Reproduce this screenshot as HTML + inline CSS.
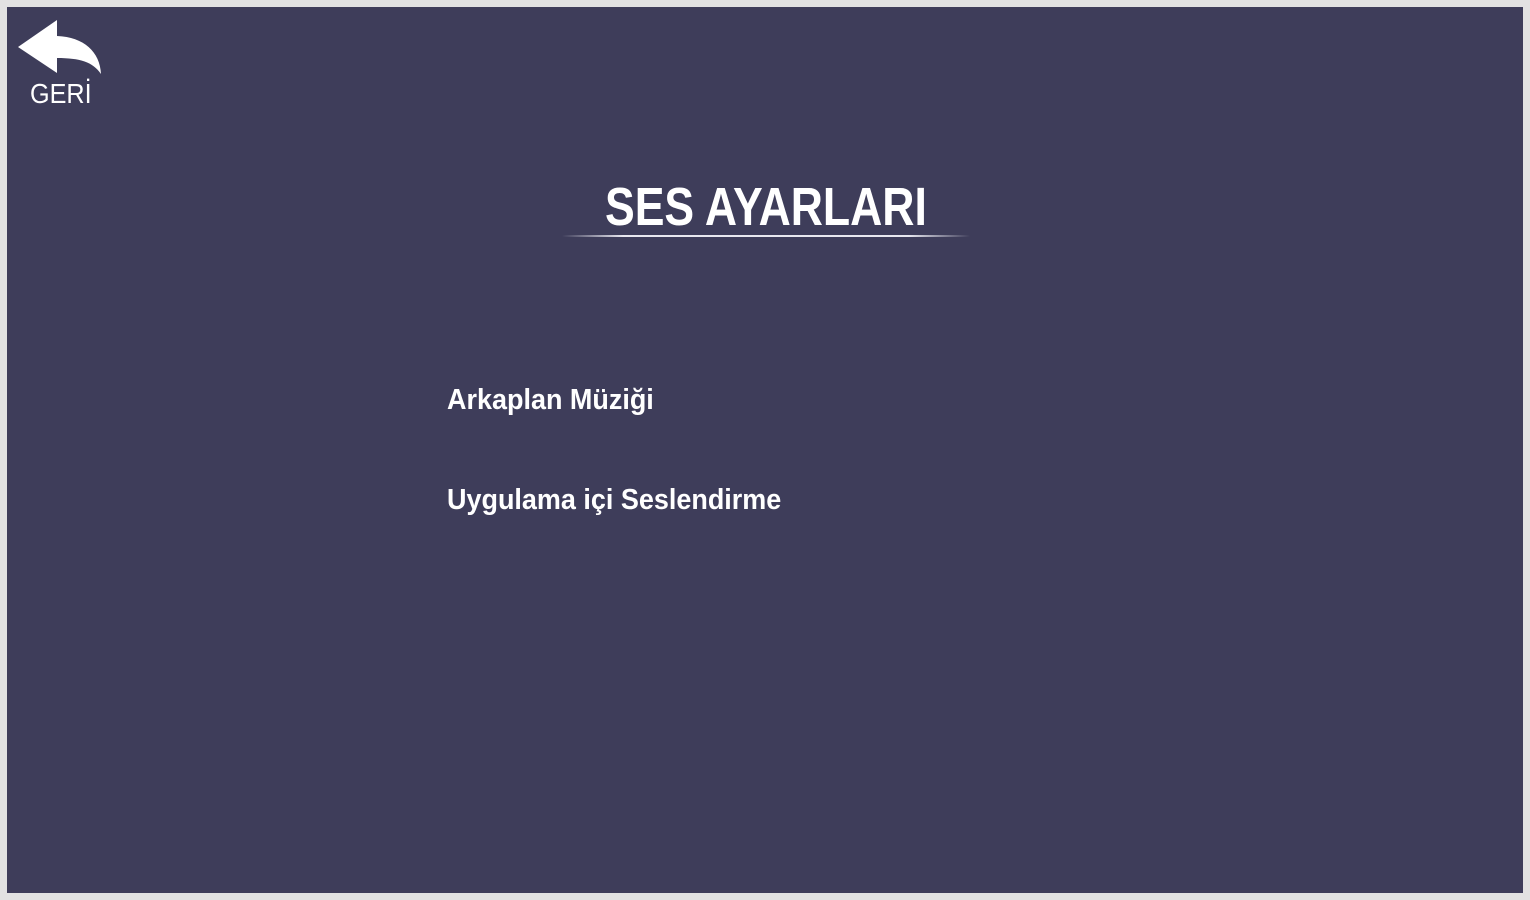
<!DOCTYPE html>
<html><head><meta charset="utf-8"><style>
html,body{margin:0;padding:0}
body{width:1530px;height:900px;background:#e2e2e2;position:relative;overflow:hidden;font-family:"Liberation Sans",sans-serif;color:#fff}
.panel{position:absolute;left:7px;top:7px;width:1516px;height:886px;background:#3e3d5a}
.t{position:absolute;white-space:nowrap;font-weight:bold;transform-origin:left top}
.line{position:absolute;left:562px;top:235px;width:408px;height:2px;background:linear-gradient(90deg,rgba(255,255,255,0),#e8e8f0 15%,#e8e8f0 85%,rgba(255,255,255,0))}
</style></head><body>
<div class="panel"></div>
<svg style="position:absolute;left:0;top:0" width="120" height="80">
<path d="M18 47 L57 20 L57 36 C84 37 100 52 101 74 C93 62 80 58 57 58 L57 73 Z" fill="#fff"/>
</svg>
<div class="t" style="left:30px;top:78px;font-size:28px;font-weight:normal;transform:scaleX(0.9)">GERİ</div>
<div class="t" style="left:605px;top:176px;font-size:54px;transform:scaleX(0.825)">SES AYARLARI</div>
<div class="line"></div>
<div class="t" style="left:447px;top:384px;font-size:29px;transform:scaleX(0.93)">Arkaplan Müziği</div>
<div class="t" style="left:447px;top:484px;font-size:29px;transform:scaleX(0.93)">Uygulama içi Seslendirme</div>
</body></html>
